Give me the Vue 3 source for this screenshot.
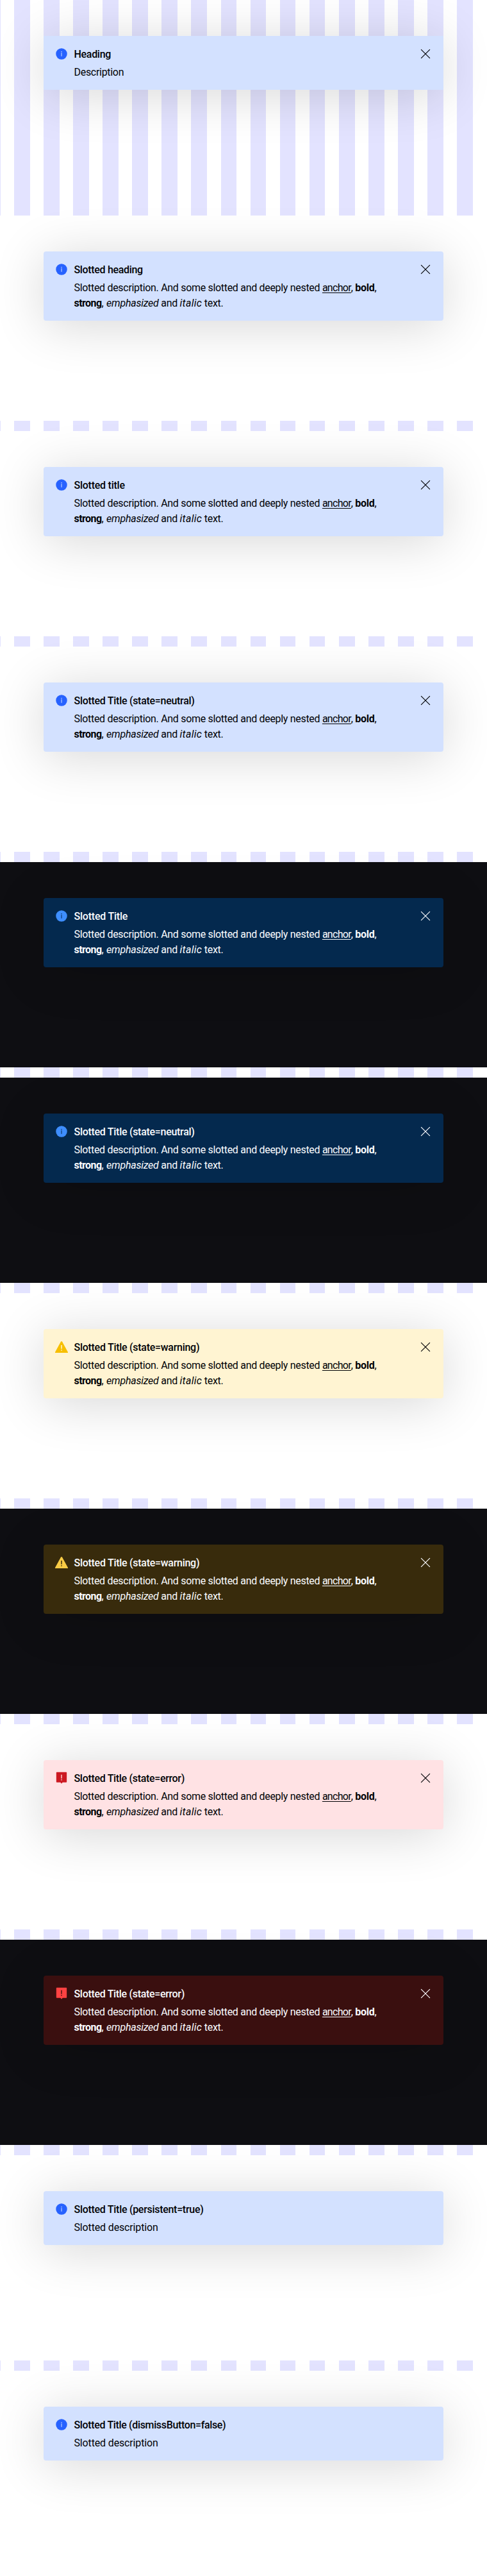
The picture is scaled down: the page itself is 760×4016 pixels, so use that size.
<script setup>
const items = [
  { title: 'Heading', track: -0.3, text: 'Description', textTrack: -0.3, plain: true },
  { title: 'Slotted heading', track: -0.33 },
  { title: 'Slotted title', track: -0.25 },
  { title: 'Slotted Title (state=neutral)', track: -0.29 },
  { title: 'Slotted Title', track: -0.22, dark: true },
  { title: 'Slotted Title (state=neutral)', track: -0.29, dark: true },
  { title: 'Slotted Title (state=warning)', track: -0.28, state: 'warning' },
  { title: 'Slotted Title (state=warning)', track: -0.28, state: 'warning', dark: true },
  { title: 'Slotted Title (state=error)', track: -0.32, state: 'error' },
  { title: 'Slotted Title (state=error)', track: -0.32, state: 'error', dark: true },
  { title: 'Slotted Title (persistent=true)', track: -0.29, text: 'Slotted description', textTrack: -0.15, fixed: true },
  { title: 'Slotted Title (dismissButton=false)', track: -0.35, text: 'Slotted description', textTrack: -0.15, fixed: true },
]
</script>

<template>
  <main class="page">
    <div class="grid">
      <span v-for="n in 17" :key="n" class="column"></span>
    </div>
    <section
      v-for="(b, i) in items"
      :key="i"
      class="stage"
      :class="{ clear: b.plain, dark: b.dark }"
    >
      <div class="banner" :class="b.state || 'info'">
        <svg class="icon" viewBox="0 0 24 24">
          <template v-if="b.state === 'warning'">
            <path class="fill" d="M11 1.4h2L24 21.6v1.2H0v-1.2Z" />
            <path class="mark" d="M11.1 8.4h1.8v7h-1.8zM11.1 17h1.8v2h-1.8z" />
          </template>
          <template v-else-if="b.state === 'error'">
            <path class="fill" d="M3.2.8h17.6a1 1 0 0 1 1 1V19.2a1 1 0 0 1-1 1H14L12 22.6 10 20.2H3.2a1 1 0 0 1-1-1V1.8a1 1 0 0 1 1-1Z" />
            <path class="mark" d="M11.2 5.6h1.6v7.2h-1.6zM11.2 14.4h1.6v1.7h-1.6z" />
          </template>
          <template v-else>
            <circle class="fill" cx="12" cy="12" r="10.5" />
            <path class="mark" d="M11.4 10h1.2v6.6h-1.2zM11.3 7.2h1.4v1.4h-1.4z" />
          </template>
        </svg>
        <div class="body">
          <h5 :style="{ letterSpacing: b.track + 'px' }">{{ b.title }}</h5>
          <p v-if="b.text" :style="{ letterSpacing: b.textTrack + 'px' }">{{ b.text }}</p>
          <p v-else>
            Slotted description. And some slotted and deeply nested <a>anchor</a>, <b>bold</b>,<br />
            <strong>strong</strong><span class="sep">, </span><em>emphasized</em> and <i>italic</i> text.
          </p>
        </div>
        <svg v-if="!b.fixed" class="close" viewBox="0 0 24 24">
          <path d="M3.7 3.7 20.3 20.3M20.3 3.7 3.7 20.3" />
        </svg>
      </div>
    </section>
  </main>
</template>

<style>
body { margin: 0; }
</style>

<style scoped>
.page {
  position: relative;
  display: flex;
  flex-direction: column;
  gap: 16px;
  width: 760px;
  height: 4016px;
  overflow: hidden;
  background: #fff;
}
/* column overlay behind the stages */
.grid {
  position: absolute;
  inset: 0;
  display: flex;
  gap: 21.5px;
  overflow: hidden;
}
.column {
  flex: none;
  width: 24.607px;
  background: #e3e3ff;
}
.column:first-child {
  width: 1px;
  margin-right: -0.607px;
}
.stage {
  position: relative;
  flex: none;
  box-sizing: border-box;
  height: 320px;
  padding: 56px 68px 0;
  background: #fff;
}
.clear { background: none; }
.dark { background: #0e0e12; }
.banner {
  display: flex;
  align-items: flex-start;
  box-sizing: border-box;
  padding: 16px;
  border-radius: 4px;
  color: #010205;
  background: var(--bg);
  box-shadow: 0 8px 80px rgba(0, 0, 0, 0.16);
}
.clear .banner { border-radius: 0; }
.info { --bg: #d3e1ff; --tone: #2762ff; }
.warning { --bg: #fff4d2; --tone: #f7bf00; }
.error { --bg: #ffe2e4; --tone: #cc1922; }
.dark .banner { color: #fbfcff; }
.dark .info { --bg: #04294e; --tone: #3e8eff; }
.dark .warning { --bg: #382b0c; --tone: #f9cb45; }
.dark .error { --bg: #3a0f0f; --tone: #ff4242; }
.icon {
  flex: none;
  width: 20px;
  height: 20px;
  margin: 2px 9.5px 0 2px;
}
.fill { fill: var(--tone); }
.mark { fill: var(--bg); }
.body {
  flex: 1;
  padding-top: 1px;
  margin-bottom: -1px;
}
h5, p {
  margin: 0;
  font: 400 16px/24px "Roboto", sans-serif;
  white-space: nowrap;
}
h5 { font-weight: 500; margin-bottom: 4px; }
p { letter-spacing: -0.31px; }
a { text-decoration: underline; text-underline-offset: 2px; letter-spacing: -0.72px; }
b, strong { font-weight: 700; }
strong { letter-spacing: -0.57px; }
.sep { letter-spacing: 0.2px; }
em { letter-spacing: -0.23px; }
i { letter-spacing: 0.27px; }
.close {
  flex: none;
  width: 20px;
  height: 20px;
  margin: 2px;
  fill: none;
  stroke: currentColor;
  stroke-width: 1.4;
}
</style>
